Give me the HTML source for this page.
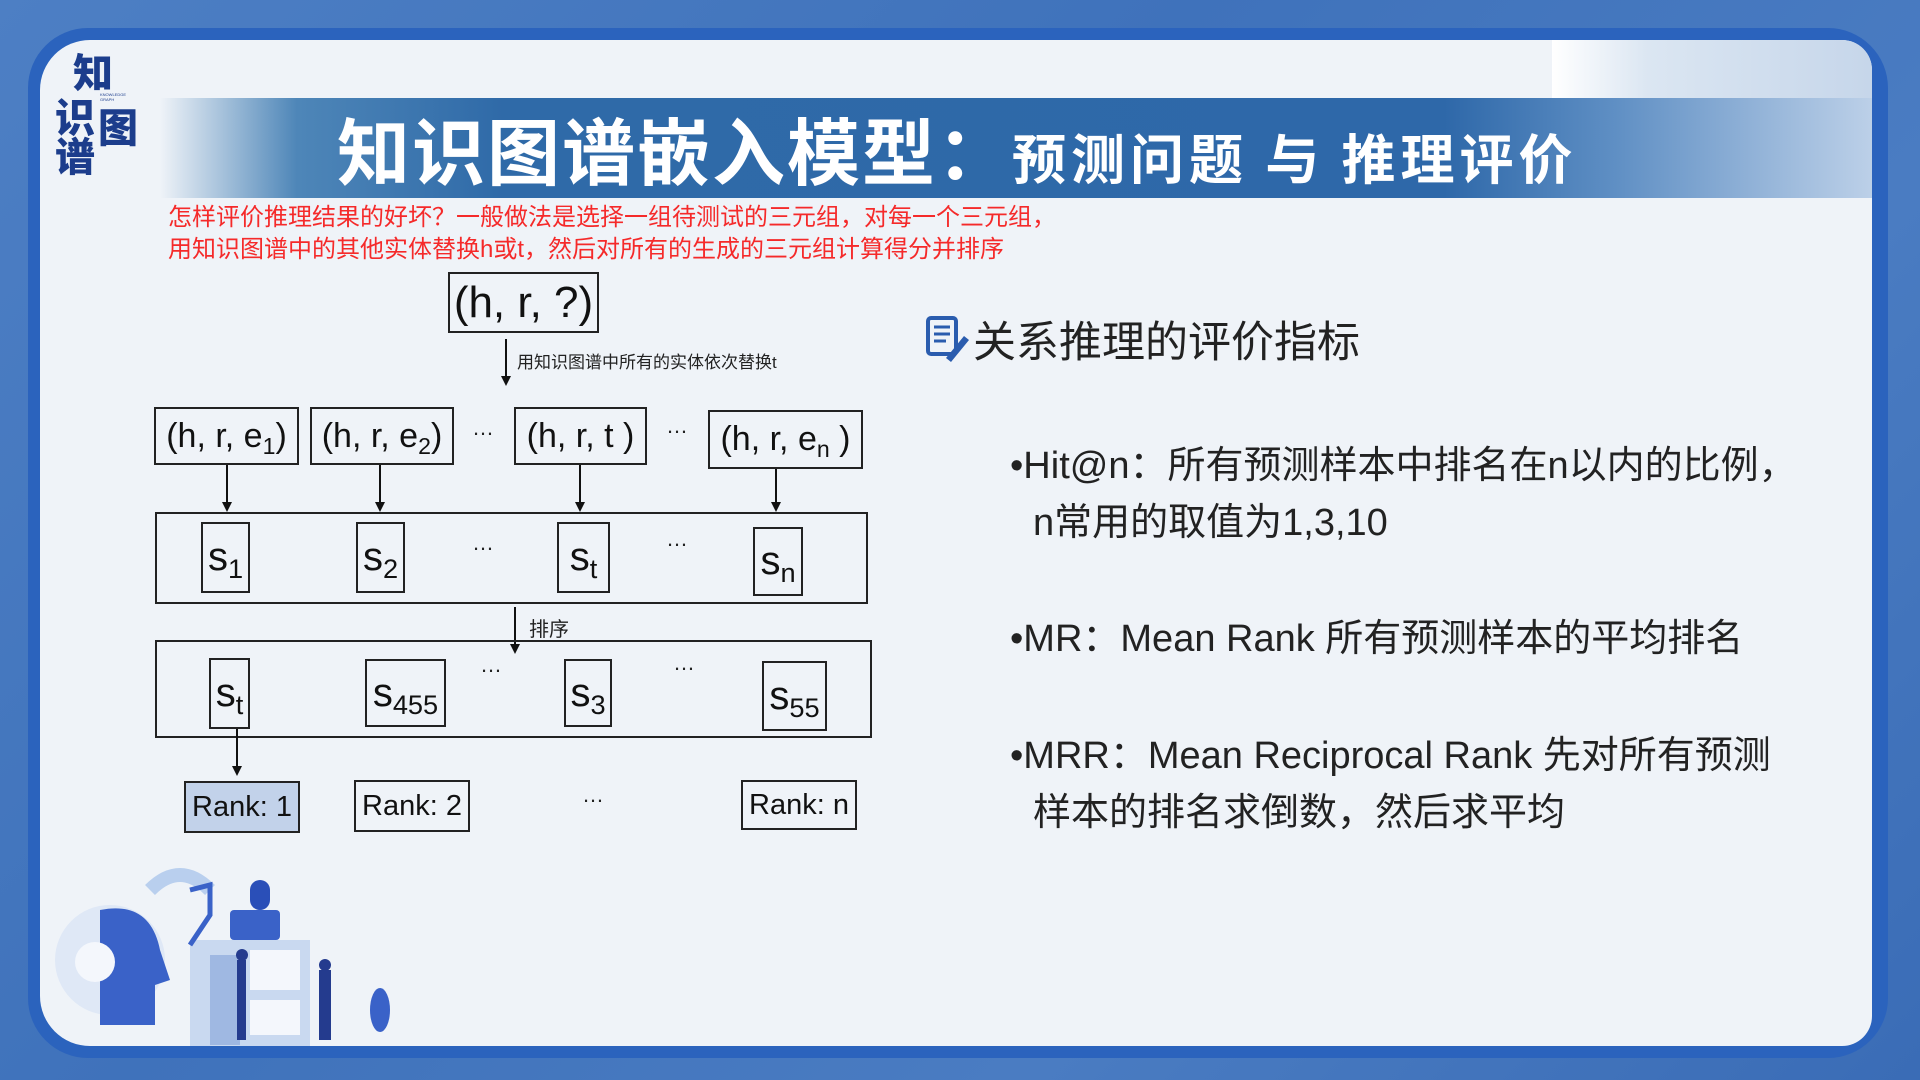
<!DOCTYPE html>
<html><head><meta charset="utf-8"><style>
*{margin:0;padding:0;box-sizing:border-box}
body{width:1920px;height:1080px;overflow:hidden;position:relative;background:linear-gradient(135deg,#4d7fc4 0%,#3f72bb 40%,#4a7cc2 70%,#3a6cb6 100%);font-family:"Liberation Sans","Noto Sans CJK SC",sans-serif}
.frame{position:absolute;left:28px;top:28px;width:1860px;height:1030px;border-radius:60px;background:#2b63bd}
.panel{position:absolute;left:40px;top:40px;width:1832px;height:1006px;border-radius:50px 30px 30px 50px;background:#eff3f8;overflow:hidden}
.banner{position:absolute;left:120px;top:58px;width:1712px;height:100px;background:linear-gradient(90deg,rgba(47,106,168,0) 0%,#4e86b8 8%,#2f6aa8 20%,#2e68a9 75%,#5f8fc4 85%,#bcd0e8 100%)}
.glow{position:absolute;left:1512px;top:0;width:320px;height:60px;background:linear-gradient(90deg,#fff 0%,#dbe6f2 30%,#c6d6ea 100%)}
.abs{position:absolute;white-space:nowrap}
.title{left:297px;top:58px;height:100px;line-height:100px;color:#fff;font-weight:bold;font-family:"Noto Sans CJK SC",sans-serif}
.logo{color:#1c3d8c;font-weight:900;font-family:"Noto Sans CJK SC",sans-serif;font-size:40px;line-height:40px}
.red{color:#f52a2a;font-size:24px;left:128px;font-family:"Liberation Sans","Noto Sans CJK SC",sans-serif}
.box{position:absolute;border:2px solid #222;background:transparent;display:flex;align-items:center;justify-content:center;color:#111;font-family:"Liberation Sans","Noto Sans CJK SC",sans-serif;white-space:nowrap}
.vl{position:absolute;width:2px;background:#111}
.ah{position:absolute;width:0;height:0;border-left:5px solid transparent;border-right:5px solid transparent;border-top:10px solid #111}
.dots{position:absolute;font-size:22px;color:#222}
sub{font-size:0.68em;vertical-align:-0.3em;line-height:0}
.rt{color:#222;font-family:"Liberation Sans","Noto Sans CJK SC",sans-serif;font-size:38px}
</style></head><body>
<div class="frame"></div>
<div class="panel">
 <div class="glow"></div>
 <div class="banner"></div>
 <div class="abs title"><span style="font-size:73px;letter-spacing:2px">知识图谱嵌入模型：</span><span style="font-size:54px;letter-spacing:5px">预测问题 与 推理评价</span></div>
 <div class="abs logo" style="left:33px;top:10px">知</div>
 <div class="abs logo" style="left:15px;top:55px">识</div>
 <div class="abs logo" style="left:58px;top:65px">图</div>
 <div class="abs logo" style="left:15px;top:94px">谱</div>
 <div class="abs" style="left:60px;top:52px;font-size:4px;color:#1c3d8c">KNOWLEDGE<br>GRAPH</div>
 <div class="abs red" style="top:157px">怎样评价推理结果的好坏？一般做法是选择一组待测试的三元组，对每一个三元组，</div>
 <div class="abs red" style="top:189px">用知识图谱中的其他实体替换h或t，然后对所有的生成的三元组计算得分并排序</div>

 <div class="box" style="left:408px;top:232px;width:151px;height:61px;font-size:44px"><span>(h, r, ?)</span></div>
 <div class="vl" style="left:465px;top:299px;height:40px"></div><div class="ah" style="left:461px;top:336px"></div>
 <div class="abs" style="left:477px;top:308px;font-size:17px;color:#222">用知识图谱中所有的实体依次替换t</div>

 <div class="box" style="left:114px;top:367px;width:145px;height:58px;font-size:34px"><span>(h, r, e<sub>1</sub>)</span></div>
 <div class="box" style="left:270px;top:367px;width:144px;height:58px;font-size:34px"><span>(h, r, e<sub>2</sub>)</span></div>
 <div class="dots" style="left:432px;top:375px">…</div>
 <div class="box" style="left:474px;top:367px;width:133px;height:58px;font-size:34px"><span>(h, r, t )</span></div>
 <div class="dots" style="left:626px;top:373px">…</div>
 <div class="box" style="left:668px;top:370px;width:155px;height:59px;font-size:34px"><span>(h, r, e<sub>n</sub> )</span></div>

 <div class="vl" style="left:186px;top:425px;height:40px"></div><div class="ah" style="left:182px;top:462px"></div>
 <div class="vl" style="left:339px;top:425px;height:40px"></div><div class="ah" style="left:335px;top:462px"></div>
 <div class="vl" style="left:539px;top:425px;height:40px"></div><div class="ah" style="left:535px;top:462px"></div>
 <div class="vl" style="left:735px;top:429px;height:36px"></div><div class="ah" style="left:731px;top:462px"></div>

 <div class="box" style="left:115px;top:472px;width:713px;height:92px"></div>
 <div class="box" style="left:161px;top:482px;width:49px;height:71px;font-size:40px"><span>s<sub>1</sub></span></div>
 <div class="box" style="left:316px;top:482px;width:49px;height:71px;font-size:40px"><span>s<sub>2</sub></span></div>
 <div class="dots" style="left:432px;top:490px">…</div>
 <div class="box" style="left:517px;top:482px;width:53px;height:71px;font-size:40px"><span>s<sub>t</sub></span></div>
 <div class="dots" style="left:626px;top:486px">…</div>
 <div class="box" style="left:713px;top:487px;width:50px;height:69px;font-size:40px"><span>s<sub>n</sub></span></div>

 <div class="vl" style="left:474px;top:567px;height:40px"></div><div class="ah" style="left:470px;top:604px"></div>
 <div class="abs" style="left:489px;top:573px;font-size:20px;color:#222">排序</div>

 <div class="box" style="left:115px;top:600px;width:717px;height:98px"></div>
 <div class="box" style="left:169px;top:618px;width:41px;height:71px;font-size:40px"><span>s<sub>t</sub></span></div>
 <div class="box" style="left:325px;top:619px;width:81px;height:68px;font-size:40px"><span>s<sub>455</sub></span></div>
 <div class="dots" style="left:440px;top:612px">…</div>
 <div class="box" style="left:524px;top:619px;width:48px;height:68px;font-size:40px"><span>s<sub>3</sub></span></div>
 <div class="dots" style="left:633px;top:610px">…</div>
 <div class="box" style="left:722px;top:621px;width:65px;height:70px;font-size:40px"><span>s<sub>55</sub></span></div>

 <div class="vl" style="left:196px;top:689px;height:40px"></div><div class="ah" style="left:192px;top:726px"></div>
 <div class="box" style="left:144px;top:741px;width:116px;height:52px;font-size:29px;background:#c2d2ea">Rank: 1</div>
 <div class="box" style="left:314px;top:740px;width:116px;height:52px;font-size:29px">Rank: 2</div>
 <div class="dots" style="left:542px;top:742px">…</div>
 <div class="box" style="left:701px;top:740px;width:116px;height:50px;font-size:29px">Rank: n</div>

 <svg class="abs" style="left:884px;top:274px" width="46" height="48" viewBox="0 0 46 48">
  <rect x="4" y="4" width="28" height="36" rx="3" fill="none" stroke="#2a5cae" stroke-width="4"/>
  <path d="M10 13h16M10 20h16M10 27h12" stroke="#2a5cae" stroke-width="3"/>
  <path d="M22 44l18-22 5 4-18 22z" fill="#2a5cae"/>
 </svg>
 <div class="abs rt" style="left:933px;top:268px;font-size:43px">关系推理的评价指标</div>
 <div class="abs rt" style="left:970px;top:394px">•Hit@n：所有预测样本中排名在n以内的比例，</div>
 <div class="abs rt" style="left:993px;top:451px">n常用的取值为1,3,10</div>
 <div class="abs rt" style="left:970px;top:567px">•MR：Mean Rank 所有预测样本的平均排名</div>
 <div class="abs rt" style="left:970px;top:684px">•MRR：Mean Reciprocal Rank 先对所有预测</div>
 <div class="abs rt" style="left:993px;top:741px">样本的排名求倒数，然后求平均</div>

 <svg class="abs" style="left:0;top:810px" width="360" height="200" viewBox="0 0 360 200">
  <path d="M110 40 Q140 10 170 40" fill="none" stroke="#b9cfee" stroke-width="14"/>
  <circle cx="70" cy="110" r="55" fill="#dfe8f6"/>
  <path d="M60 60 Q110 50 120 100 L130 130 L115 135 L115 175 L60 175 Z" fill="#3a62c8"/>
  <circle cx="55" cy="112" r="20" fill="#f4f7fc"/>
  <rect x="150" y="90" width="120" height="110" fill="#c9d9f0"/>
  <rect x="170" y="105" width="30" height="90" fill="#9fb8e2"/>
  <rect x="210" y="100" width="50" height="40" fill="#f4f7fc"/>
  <rect x="210" y="150" width="50" height="35" fill="#f4f7fc"/>
  <rect x="190" y="60" width="50" height="30" rx="4" fill="#3a62c8"/>
  <rect x="210" y="30" width="20" height="30" rx="10" fill="#2a4fb8"/>
  <path d="M200 110 v80 M203 110 v80" stroke="#243b8e" stroke-width="6"/>
  <path d="M282 120 v70 M288 120 v70" stroke="#243b8e" stroke-width="6"/>
  <circle cx="202" cy="105" r="6" fill="#243b8e"/><circle cx="285" cy="115" r="6" fill="#243b8e"/>
  <path d="M150 40 l20 -5 l0 30 l-20 30" stroke="#3a62c8" stroke-width="5" fill="none"/>
  <ellipse cx="340" cy="160" rx="10" ry="22" fill="#3a62c8"/>
 </svg>
</div>
</body></html>
